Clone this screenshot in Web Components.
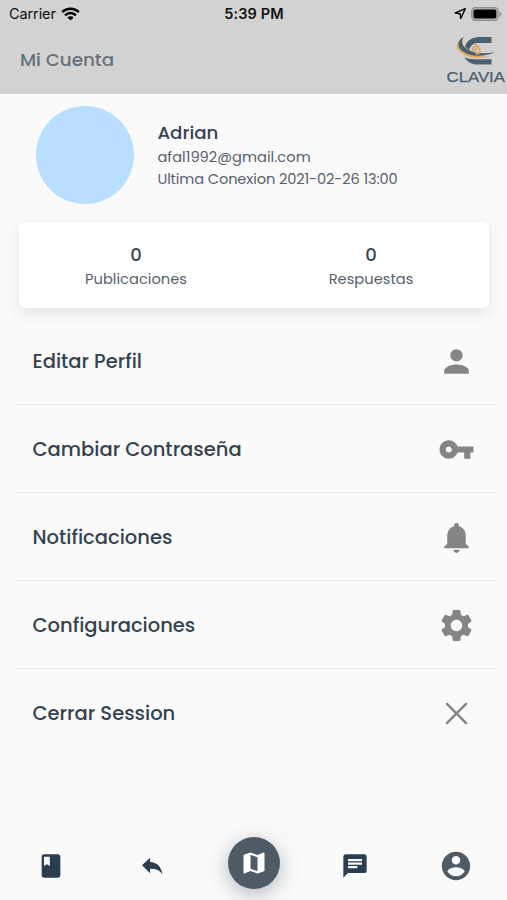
<!DOCTYPE html>
<html lang="es">
<head>
<meta charset="utf-8">
<title>Mi Cuenta</title>
<style>
  html, body {
    margin: 0;
    height: 100%;
    overflow: hidden;
    background: #fafafa;
    font-family: Poppins, Inter, "Liberation Sans", sans-serif;
    color: #35424f;
  }
</style>
</head>
<body>
<account-page></account-page>

<script>
const ICONS = {
  person: '<path d="M12 12c2.21 0 4-1.79 4-4s-1.79-4-4-4-4 1.79-4 4 1.79 4 4 4zm0 2c-2.67 0-8 1.34-8 4v2h16v-2c0-2.66-5.33-4-8-4z"/>',
  key: '<path d="M12.65 10C11.83 7.67 9.61 6 7 6c-3.31 0-6 2.69-6 6s2.69 6 6 6c2.61 0 4.83-1.67 5.65-4H17v4h4v-4h2v-4H12.65zM7 14c-1.1 0-2-.9-2-2s.9-2 2-2 2 .9 2 2-.9 2-2 2z"/>',
  bell: '<path d="M12 22c1.1 0 2-.9 2-2h-4c0 1.1.89 2 2 2zm6-6v-5c0-3.07-1.64-5.64-4.5-6.32V4c0-.83-.67-1.5-1.5-1.5s-1.5.67-1.5 1.5v.68C7.63 5.36 6 7.92 6 11v5l-2 2v1h16v-1l-2-2z"/>',
  gear: '<path d="M19.43 12.98c.04-.32.07-.64.07-.98s-.03-.66-.07-.98l2.11-1.65c.19-.15.24-.42.12-.64l-2-3.46c-.12-.22-.39-.3-.61-.22l-2.49 1c-.52-.4-1.08-.73-1.69-.98l-.38-2.65C14.46 2.18 14.25 2 14 2h-4c-.25 0-.46.18-.49.42l-.38 2.65c-.61.25-1.17.59-1.69.98l-2.49-1c-.23-.09-.49 0-.61.22l-2 3.46c-.13.22-.07.49.12.64l2.11 1.65c-.04.32-.07.65-.07.98s.03.66.07.98l-2.11 1.65c-.19.15-.24.42-.12.64l2 3.46c.12.22.39.3.61.22l2.49-1c.52.4 1.08.73 1.69.98l.38 2.65c.03.24.24.42.49.42h4c.25 0 .46-.18.49-.42l.38-2.65c.61-.25 1.17-.59 1.69-.98l2.49 1c.23.09.49 0 .61-.22l2-3.46c.12-.22.07-.49-.12-.64l-2.11-1.65zM12 15.7c-2.04 0-3.7-1.66-3.7-3.7s1.66-3.7 3.7-3.7 3.7 1.66 3.7 3.7-1.66 3.7-3.7 3.7z"/>',
  close: '<path d="M5.8 5.8l12.4 12.4M18.2 5.8L5.8 18.2" fill="none" stroke="currentColor" stroke-width="1.6" stroke-linecap="round"/>',
  book: '<path d="M18 2H6c-1.1 0-2 .9-2 2v16c0 1.1.9 2 2 2h12c1.1 0 2-.9 2-2V4c0-1.1-.9-2-2-2zM6 4h5v8l-2.5-1.5L6 12V4z"/>',
  reply: '<path d="M2.800 11.200L10.200 4.300v4.100c6.400.3 10.200 4.200 11.500 11.300-2.700-3.700-6.200-5.300-11.500-5.100v4z"/>',
  map: '<path d="M20.5 3l-.16.03L15 5.1 9 3 3.36 4.9c-.21.07-.36.25-.36.48V20.5c0 .28.22.5.5.5l.16-.03L9 18.9l6 2.1 5.64-1.9c.21-.07.36-.25.36-.48V3.5c0-.28-.22-.5-.5-.5zM15 19l-6-2.11V5l6 2.11V19z"/>',
  chat: '<path d="M20 2H4c-1.1 0-1.99.9-1.99 2L2 22l4-4h14c1.1 0 2-.9 2-2V4c0-1.1-.9-2-2-2zM6 9h12v2H6V9zm8 5H6v-2h8v2zm4-6H6V6h12v2z"/>',
  account: '<path d="M12 2C6.48 2 2 6.48 2 12s4.48 10 10 10 10-4.48 10-10S17.52 2 12 2zm0 3c1.66 0 3 1.34 3 3s-1.34 3-3 3-3-1.34-3-3 1.34-3 3-3zm0 14.2c-2.5 0-4.71-1.28-6-3.22.03-1.99 4-3.08 6-3.08 1.99 0 5.97 1.09 6 3.08-1.29 1.94-3.5 3.22-6 3.22z"/>',
};

class AppIcon extends HTMLElement {
  constructor() {
    super();
    this.attachShadow({ mode: 'open' });
  }

  connectedCallback() {
    const size = this.getAttribute('size') || 24;
    this.shadowRoot.innerHTML = `
      <style>
        :host { display: block; width: ${size}px; height: ${size}px; }
        svg { display: block; }
      </style>
      <svg width="${size}" height="${size}" viewBox="0 0 24 24" fill="currentColor">${ICONS[this.getAttribute('name')]}</svg>
    `;
  }
}

class StatusBar extends HTMLElement {
  constructor() {
    super();
    this.attachShadow({ mode: 'open' }).innerHTML = `
      <style>
        :host {
          display: grid;
          grid-template-columns: 1fr auto 1fr;
          align-items: center;
          height: 27px;
          padding: 0 5px 0 9px;
          color: #111;
          font: 14.5px/27px Inter, "Liberation Sans", sans-serif;
        }
        div { display: flex; align-items: center; }
        .left { gap: 5.5px; letter-spacing: -.1px; }
        .right { justify-content: flex-end; gap: 4px; }
        .time { padding-right: 3px; font-weight: 600; letter-spacing: .15px; }
        svg { display: block; }
      </style>
      <div class="left">
        <span>Carrier</span>
        <svg width="19" height="14" viewBox="0 0 19 14" fill="none" stroke="#000" stroke-width="2.5">
          <path d="M1.2 5.1a11.8 11.8 0 0 1 16.6 0"/>
          <path d="M4.1 8.3a7.6 7.6 0 0 1 10.8 0"/>
          <path d="M9.5 13.6L6.4 10.5a4.4 4.4 0 0 1 6.2 0z" fill="#000" stroke="none"/>
        </svg>
      </div>
      <span class="time">5:39 PM</span>
      <div class="right">
        <svg width="13" height="13" viewBox="0 0 13 13" fill="none" stroke="#000" stroke-width="1.4" stroke-linejoin="round">
          <path d="M11.3 1.7L1.3 6l4.9.8.5 4.7z"/>
        </svg>
        <svg width="31" height="14" viewBox="0 0 31 14">
          <rect x=".7" y=".7" width="26.4" height="12.6" rx="3.6" fill="#b4b4b4" stroke="#8e8e8e" stroke-width="1.2"/>
          <rect x="2.5" y="2.4" width="22.8" height="9.2" rx="1.8" fill="#000"/>
          <path d="M28.4 4.6v4.8c1.6-.6 1.9-1.5 1.9-2.4s-.3-1.8-1.9-2.4z" fill="#8e8e8e"/>
        </svg>
      </div>
    `;
  }
}

class ClaviaLogo extends HTMLElement {
  constructor() {
    super();
    this.attachShadow({ mode: 'open' }).innerHTML = `
      <style>
        :host { display: block; }
        svg { display: block; }
        text { font: 400 15.5px "Liberation Sans", sans-serif; }
      </style>
      <svg width="61" height="50" viewBox="446 35 61 50">
        <path d="M491.5 37h-12c-7.500 0-12.500 3.500-14.500 9.500l4 4c1-5 4.500-7.500 9.500-7.500h13z" fill="#4a606f"/>
        <path d="M465 36.500c-8 3-10 9.500-6.500 14 6 7.500 20.500 9.500 31.500 5.500-11 1.500-23-1.500-27-7.500-2.700-4-1.500-8.500 2-12z" fill="#dfa765"/>
        <path d="M463.500 37c-5.500 3.300-6.500 8.800-2.500 12.700 7 6.800 22.500 8.300 34 2.300-10.500 2.500-23.500 1-29.500-4-3.700-3.200-4.300-7.300-2-11z" fill="#4a606f"/>
        <path d="M464.500 57.500c3 4.700 7.500 7 13 7h14v-5.300h-13c-5 0-9.500-.2-14-1.700z" fill="#4a606f"/>
        <path d="M472.300 48.300l3.700-3.300 3.700 3.300v4.500l-2.700 1-3-3z" fill="none" stroke="#dfa765" stroke-width="1.800"/>
        <circle cx="476.200" cy="49.300" r="1.200" fill="#dfa765"/>
        <text x="446.5" y="82" textLength="58.5" lengthAdjust="spacingAndGlyphs" fill="#4c5c6b" stroke="#4c5c6b" stroke-width=".25">CLAVIA</text>
      </svg>
    `;
  }
}

class AppHeader extends HTMLElement {
  constructor() {
    super();
    this.attachShadow({ mode: 'open' }).innerHTML = `
      <style>
        :host { display: block; height: 94px; background: #d2d2d2; }
        .bar {
          display: flex;
          justify-content: space-between;
          padding-top: 8px;
        }
        .title {
          padding-left: 20px;
          font-size: 18.3px;
          font-weight: 500;
          line-height: 50px;
          color: #66717a;
        }
      </style>
      <status-bar></status-bar>
      <div class="bar">
        <div class="title"><slot></slot></div>
        <clavia-logo></clavia-logo>
      </div>
    `;
  }
}

class UserProfile extends HTMLElement {
  constructor() {
    super();
    this.attachShadow({ mode: 'open' }).innerHTML = `
      <style>
        :host {
          display: flex;
          gap: 23px;
          padding: 12px 0 0 36.4px;
        }
        .avatar {
          width: 98px;
          height: 98px;
          border-radius: 50%;
          background: #badefd;
        }
        .info { padding-top: 13px; font-size: 14.6px; line-height: 22px; color: #56616c; }
        .name { font-size: 18.2px; font-weight: 500; line-height: 27px; color: #35424f; }
        .mail { letter-spacing: .04px; }
        .seen { letter-spacing: -.11px; }
      </style>
      <div class="avatar"></div>
      <div class="info">
        <div class="name"><slot name="name"></slot></div>
        <div class="mail"><slot name="mail"></slot></div>
        <div class="seen"><slot name="seen"></slot></div>
      </div>
    `;
  }
}

class StatsCard extends HTMLElement {
  constructor() {
    super();
    this.attachShadow({ mode: 'open' }).innerHTML = `
      <style>
        :host {
          display: flex;
          height: 86px;
          margin: 18px 18.5px 0 18.5px;
          border-radius: 6px;
          background: #fff;
          box-shadow: 0 5px 14px rgba(40, 55, 65, .11);
        }
      </style>
      <slot></slot>
    `;
  }
}

class StatItem extends HTMLElement {
  constructor() {
    super();
    this.attachShadow({ mode: 'open' }).innerHTML = `
      <style>
        :host { display: block; flex: 1; padding-top: 20px; text-align: center; }
        .value { font-size: 18px; font-weight: 500; line-height: 26px; }
        .label { font-size: 14.7px; line-height: 22px; color: #56616c; }
      </style>
      <div class="value">${this.getAttribute('value')}</div>
      <div class="label"><slot></slot></div>
    `;
  }
}

class MenuItem extends HTMLElement {
  constructor() {
    super();
    this.attachShadow({ mode: 'open' }).innerHTML = `
      <style>
        :host {
          display: flex;
          align-items: center;
          justify-content: space-between;
          box-sizing: border-box;
          height: 88px;
          margin: 0 11px 0 15px;
          padding: 1px 21px 0 17.5px;
          border-bottom: 1px solid #ededed;
          font-size: 19.5px;
          font-weight: 500;
        }
        :host(:last-of-type) { border-bottom-color: transparent; }
        app-icon { color: #858585; }
      </style>
      <span><slot></slot></span>
      <app-icon name="${this.getAttribute('icon')}" size="37"></app-icon>
    `;
  }
}

class TabBar extends HTMLElement {
  constructor() {
    super();
    this.attachShadow({ mode: 'open' }).innerHTML = `
      <style>
        :host { display: flex; align-items: center; height: 70px; color: #2b3d50; }
        .tab { flex: 1; display: flex; justify-content: center; padding-top: 1px; }
        .fab {
          display: flex;
          align-items: center;
          justify-content: center;
          width: 52px;
          height: 52px;
          margin-bottom: 6px;
          border-radius: 50%;
          color: #fff;
          background: #4f5b64;
          box-shadow: 0 5px 20px rgba(60, 80, 90, .38);
        }
        .active { color: #4f5b64; }
      </style>
      <div class="tab"><app-icon name="book" size="28"></app-icon></div>
      <div class="tab"><app-icon name="reply" size="26"></app-icon></div>
      <div class="tab"><div class="fab"><app-icon name="map" size="28"></app-icon></div></div>
      <div class="tab"><app-icon name="chat" size="28"></app-icon></div>
      <div class="tab active"><app-icon name="account" size="34"></app-icon></div>
    `;
  }
}

class AccountPage extends HTMLElement {
  constructor() {
    super();
    this.attachShadow({ mode: 'open' }).innerHTML = `
      <style>
        :host { display: flex; flex-direction: column; height: 900px; }
        .menu { flex: 1; padding-top: 9px; }
      </style>
      <app-header>Mi Cuenta</app-header>
      <user-profile>
        <span slot="name">Adrian</span>
        <span slot="mail">afal1992@gmail.com</span>
        <span slot="seen">Ultima Conexion 2021-02-26 13:00</span>
      </user-profile>
      <stats-card>
        <stat-item value="0">Publicaciones</stat-item>
        <stat-item value="0">Respuestas</stat-item>
      </stats-card>
      <div class="menu">
        <menu-item icon="person">Editar Perfil</menu-item>
        <menu-item icon="key">Cambiar Contraseña</menu-item>
        <menu-item icon="bell">Notificaciones</menu-item>
        <menu-item icon="gear">Configuraciones</menu-item>
        <menu-item icon="close">Cerrar Session</menu-item>
      </div>
      <tab-bar></tab-bar>
    `;
  }
}

customElements.define('app-icon', AppIcon);
customElements.define('status-bar', StatusBar);
customElements.define('clavia-logo', ClaviaLogo);
customElements.define('app-header', AppHeader);
customElements.define('user-profile', UserProfile);
customElements.define('stats-card', StatsCard);
customElements.define('stat-item', StatItem);
customElements.define('menu-item', MenuItem);
customElements.define('tab-bar', TabBar);
customElements.define('account-page', AccountPage);
</script>
</body>
</html>
